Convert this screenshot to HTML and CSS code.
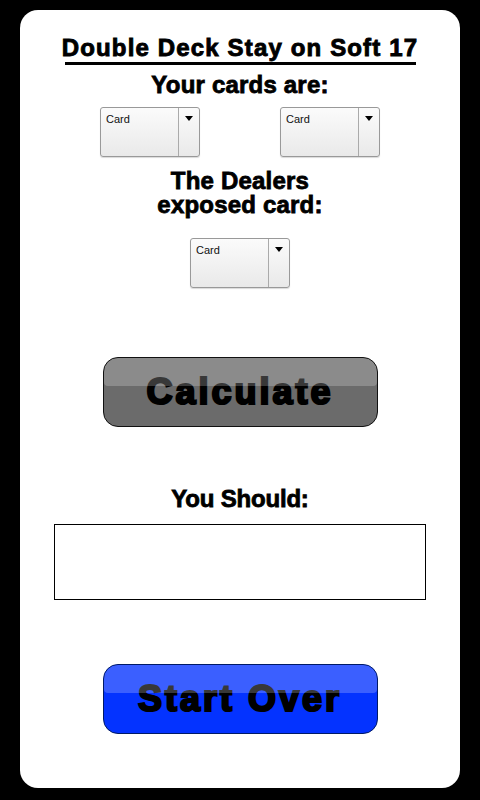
FILE: index.html
```html
<!DOCTYPE html>
<html>
<head>
<meta charset="utf-8">
<link rel="stylesheet" href="styles.css">
</head>
<body>
<div class="card">
  <h1 class="title">Double Deck Stay on Soft 17</h1>
  <div class="title-rule"></div>
  <div class="label label-cards">Your cards are:</div>
  <div class="select-row">
    <div class="select"><span class="select-text">Card</span><span class="select-btn"><span class="arrow"></span></span></div>
    <div class="select"><span class="select-text">Card</span><span class="select-btn"><span class="arrow"></span></span></div>
  </div>
  <div class="label label-dealer">The Dealers<br>exposed card:</div>
  <div class="select-row dealer-row">
    <div class="select"><span class="select-text">Card</span><span class="select-btn"><span class="arrow"></span></span></div>
  </div>
  <div class="btn btn-gray">Calculate</div>
  <div class="label label-should">You Should:</div>
  <div class="result"></div>
  <div class="btn btn-blue">Start Over</div>
</div>
</body>
</html>
```
FILE: styles.css
```css
html, body {
  margin: 0;
  padding: 0;
  background: #000;
}
body {
  width: 480px;
  height: 800px;
  overflow: hidden;
  font-family: "Liberation Sans", Arial, sans-serif;
}
.card {
  margin: 10px 20px 0 20px;
  height: 778px;
  background: #fff;
  border-radius: 18px;
  display: flex;
  flex-direction: column;
  align-items: center;
  padding-top: 24px;
  box-sizing: border-box;
}
.title {
  margin: 0;
  font-size: 24px;
  line-height: 28px;
  font-weight: bold;
  letter-spacing: 1.15px;
  -webkit-text-stroke: 0.9px #000;
  color: #000;
  white-space: nowrap;
}
.title-rule {
  width: 351px;
  height: 3px;
  background: #000;
}
.label {
  font-size: 24px;
  line-height: 28px;
  font-weight: bold;
  color: #000;
  text-align: center;
  -webkit-text-stroke: 0.8px #000;
  letter-spacing: 0.2px;
}
.label-cards {
  margin-top: 6px;
}
.label-dealer {
  margin-top: 12px;
  line-height: 24px;
}
.label-should {
  margin-top: 58px;
  letter-spacing: -0.2px;
}
.select-row {
  display: flex;
  justify-content: center;
  gap: 80px;
  margin-top: 8px;
}
.dealer-row {
  margin-top: 21px;
}
.select {
  width: 100px;
  height: 50px;
  box-sizing: border-box;
  border: 1px solid #999;
  border-radius: 3px;
  background: linear-gradient(#fbfbfb, #e9e9e9);
  box-shadow: 0 1px 1px rgba(0,0,0,0.15);
  display: flex;
}
.select-text {
  flex: 1;
  font-size: 11px;
  line-height: 13px;
  padding: 5px 0 0 5px;
  color: #111;
}
.select-btn {
  width: 21px;
  border-left: 1px solid #aaa;
  display: flex;
  justify-content: center;
  padding-top: 8px;
  box-sizing: border-box;
}
.arrow {
  width: 0;
  height: 0;
  border-left: 4px solid transparent;
  border-right: 4px solid transparent;
  border-top: 5px solid #000;
}
.btn {
  position: relative;
  width: 275px;
  height: 70px;
  box-sizing: border-box;
  border: 1px solid #111;
  border-radius: 15px;
  display: flex;
  align-items: center;
  justify-content: center;
  font-size: 36px;
  font-weight: bold;
  letter-spacing: 3px;
  -webkit-text-stroke: 2.2px #000;
  color: #000;
  overflow: hidden;
}
.btn::after {
  content: "";
  position: absolute;
  left: 0;
  right: 0;
  top: 0;
  height: 28px;
  background: rgba(255,255,255,0.22);
  border-radius: 14px 14px 4px 4px;
}
.btn-gray {
  margin-top: 69px;
  background: #6b6b6b;
}
.btn-blue {
  margin-top: 64px;
  background: #0433ff;
  border-color: #001a66;
}
.result {
  margin-top: 11px;
  width: 372px;
  height: 76px;
  box-sizing: border-box;
  border: 1px solid #000;
}
```
